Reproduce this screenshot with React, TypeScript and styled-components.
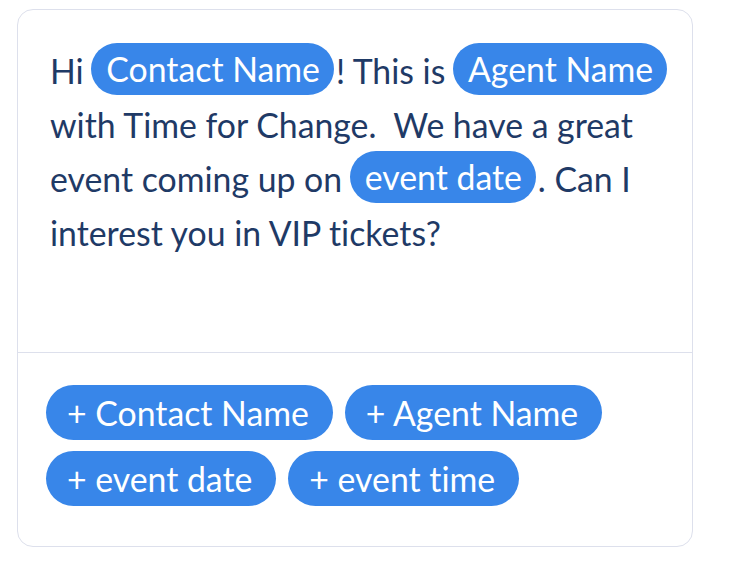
import styled, { createGlobalStyle } from "styled-components";

const GlobalStyle = createGlobalStyle`
  html, body {
    margin: 0;
    padding: 0;
    background: #ffffff;
  }
  body {
    font-family: Lato, "Noto Sans", sans-serif;
    font-variant-ligatures: none;
  }
`;

const Page = styled.div`
  width: 746px;
  height: 580px;
  padding: 9px 0 0 17px;
  box-sizing: border-box;
`;

const Card = styled.div`
  width: 676px;
  height: 538px;
  box-sizing: border-box;
  border: 1.5px solid #dde0ec;
  border-radius: 16px;
  display: flex;
  flex-direction: column;
  overflow: hidden;
`;

const Message = styled.div`
  height: 343px;
  box-sizing: border-box;
  padding: 34px 14px 0 32px;
  border-bottom: 1.5px solid #dde0ec;
  font-size: 33.8px;
  line-height: 54px;
  color: #1f3a66;
  white-space: pre-wrap;
`;

const Tag = styled.span`
  display: inline-block;
  height: 52px;
  line-height: 52px;
  vertical-align: top;
  margin: -1px 2px 0 -1px;
  padding: 0 14px 0 15px;
  border-radius: 26px;
  background: #3886e9;
  color: #ffffff;
`;

const Picker = styled.div`
  flex: 1;
  padding: 32px 28px 0 28px;
  display: flex;
  flex-wrap: wrap;
  align-content: flex-start;
  gap: 11px 12px;
`;

const AddButton = styled.button`
  height: 55px;
  padding: 0 24px 0 21px;
  border: none;
  border-radius: 28px;
  background: #3886e9;
  color: #ffffff;
  font-family: inherit;
  font-size: 33.8px;
  font-variant-ligatures: none;
  cursor: pointer;
`;

const fields = ["Contact Name", "Agent Name", "event date", "event time"];

export default function App() {
  return (
    <>
      <GlobalStyle />
      <Page>
        <Card>
          <Message>
            Hi <Tag>Contact Name</Tag>! This is <Tag>Agent Name</Tag> with Time for Change.  We have a great event coming up on <Tag>event date</Tag>. Can I interest you in VIP tickets?
          </Message>
          <Picker>
            {fields.map((f) => (
              <AddButton key={f}>+ {f}</AddButton>
            ))}
          </Picker>
        </Card>
      </Page>
    </>
  );
}
